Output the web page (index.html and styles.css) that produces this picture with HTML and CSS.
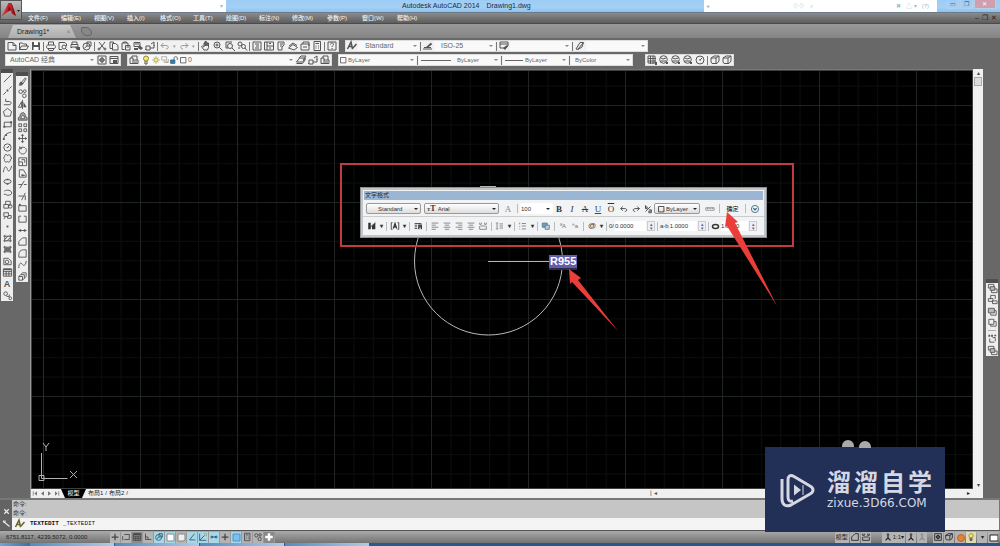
FILE: index.html
```html
<!DOCTYPE html>
<html lang="zh-CN">
<head>
<meta charset="utf-8">
<title>Autodesk AutoCAD 2014 - Drawing1.dwg</title>
<link rel="stylesheet" href="styles.css">
</head>
<body>
<svg class="defs" aria-hidden="true">
<defs>
<symbol id="new" viewBox="0 0 12 12"><path d="M2 2.500h5l3 3v4.500H2z M7 2.500v3h3"/></symbol>
<symbol id="open" viewBox="0 0 12 12"><path d="M1.500 9.500V3h3l1 1h3v2M1.500 9.500l2-3.500h7l-2 3.500z"/></symbol>
<symbol id="save" viewBox="0 0 12 12"><path class="f" d="M2 2h7l1 1v7H2z"/><path class="w" d="M4 2h4v3H4zM3.500 7h5v3h-5z"/></symbol>
<symbol id="print" viewBox="0 0 12 12"><path d="M3.500 5V2h5v3M3 8.500C1 8.500 1 5 3 5h6c2 0 2 3.500 0 3.500zM3 8.500h6l-1 2H4z"/></symbol>
<symbol id="preview" viewBox="0 0 12 12"><path d="M5 9.500H2v-7h6l1.500 1.500v2"/><circle cx="7" cy="7" r="2"/><path d="M8.500 8.500l2 2"/></symbol>
<symbol id="publish" viewBox="0 0 12 12"><path d="M3 4.500V2h5v2.500M2 8V4.500h7V7H3z"/><path class="f" d="M6 7h5v3H8z"/></symbol>
<symbol id="globe" viewBox="0 0 12 12"><circle cx="6" cy="6" r="4"/><path d="M2 6h8M6 2c-3 3-3 5 0 8c3-3 3-5 0-8"/></symbol>
<symbol id="print3d" viewBox="0 0 12 12"><circle cx="5.500" cy="6.500" r="3.500"/><path d="M6 2h4v4H6zM6 6L3.500 8"/></symbol>
<symbol id="cut" viewBox="0 0 12 12"><path d="M3 2l5.500 7M9 2L3.500 9"/><circle cx="3" cy="9" r="1"/><circle cx="9" cy="9" r="1"/></symbol>
<symbol id="copy" viewBox="0 0 12 12"><path d="M2 2h3.500v2M2 2v6.500h2M4.500 3.500h3l2.500 2v4.500h-5.500z"/></symbol>
<symbol id="paste" viewBox="0 0 12 12"><path d="M4.500 9.500H2V3h6v2M3.500 3V2h3v1"/><path d="M5.500 5.500h4.500V10H5.500zM6.500 7h2.500"/></symbol>
<symbol id="match" viewBox="0 0 12 12"><path d="M2 2.500h6v4H2zM3 4h4"/><path class="f" d="M7 5l4 3-2 2-3-2zM2 8h4v2H2z"/></symbol>
<symbol id="blockedit" viewBox="0 0 12 12"><path d="M2 6h4v4H2zM6 8h4V5M7 4l3-2v4M2 9l-1 1"/></symbol>
<symbol id="undo" viewBox="0 0 12 12"><path d="M2 5.500h5c3 0 3 3.500 0 3.500M4.500 3L2 5.500 4.500 8"/></symbol>
<symbol id="redo" viewBox="0 0 12 12"><path d="M10 5.500H5C2 5.500 2 9 5 9M7.500 3L10 5.500 7.500 8"/></symbol>
<symbol id="pan" viewBox="0 0 12 12"><path d="M4 10L1.500 6.500l1-.5L4 7V3l1-.5V6V1.500h1V6V2h1v4l.5-3h1v4.500L7.500 10z"/></symbol>
<symbol id="zoom" viewBox="0 0 12 12"><circle cx="5" cy="5" r="3"/><path d="M7.500 7.500L10.500 10.500M3.500 5h3M5 3.500v3"/></symbol>
<symbol id="zoomwin" viewBox="0 0 12 12"><path d="M2 8V2h6M2 8h2"/><circle cx="6" cy="6" r="2.500"/><path d="M8 8l3 3"/></symbol>
<symbol id="zoomprev" viewBox="0 0 12 12"><circle cx="4" cy="4" r="2"/><circle cx="7.500" cy="6.500" r="2"/><path d="M9 8l2 2.500M2 8h2"/></symbol>
<symbol id="props" viewBox="0 0 12 12"><path d="M2 2h8v8H2zM4 4h4M5 6h3M4 8h4"/></symbol>
<symbol id="dc" viewBox="0 0 12 12"><path d="M1.500 2h9v8h-9zM4 2v8M4 6h6.500M6 3.500h2M6 8h2"/></symbol>
<symbol id="tp" viewBox="0 0 12 12"><path d="M3 2h6v3L7 7v3H3zM5 4h3M5 6h2"/></symbol>
<symbol id="sheet" viewBox="0 0 12 12"><path d="M1.500 8L6 4.500l4.500 3L7 10zM2 6l4-3 4 2.500"/></symbol>
<symbol id="markup" viewBox="0 0 12 12"><path d="M2 4h8v6H2zM4 4V2h6v4M4 7h4"/></symbol>
<symbol id="calc" viewBox="0 0 12 12"><path d="M3 1.500h6.500v9H3zM4.500 3.500h3.500M4.500 6h1M7 6h1M4.500 8h1M7 8h1"/></symbol>
<symbol id="help" viewBox="0 0 12 12"><path d="M2 2h8v8H2z"/><path d="M4.500 4.500c0-2 3-2 3 0C7.500 5.500 6 5.500 6 7M6 8v1"/></symbol>
<symbol id="textstyle" viewBox="0 0 12 12"><path class="b" d="M1.500 9L5 2l1.500 7M3 6.500h3M6 9l4.500-5"/></symbol>
<symbol id="dimstyle" viewBox="0 0 12 12"><path d="M1 9h9M2 7.500h7"/><path class="f" d="M3 8l6-5.500 1 2L5 8z"/></symbol>
<symbol id="tablestyle" viewBox="0 0 12 12"><path d="M2 2h8v4L7 9M2 2v6h4M2 4h8"/><path class="f" d="M5 8l4-3 1 1-3 4z"/></symbol>
<symbol id="leader" viewBox="0 0 12 12"><path d="M2 9L6 2.500h3.500L8 7 4 9.500zM4 9l5-6"/></symbol>
<symbol id="gear" viewBox="0 0 12 12"><path d="M2 2h8v8H2z"/><circle cx="6" cy="6" r="2"/><path d="M6 3v6M3 6h6"/></symbol>
<symbol id="wsave" viewBox="0 0 12 12"><path d="M2 2.500h8v7H2zM2 4.500h8"/><path class="f" d="M5 6h4v3H5z"/></symbol>
<symbol id="layers" viewBox="0 0 12 12"><path d="M2 9.500V4h3v5.500zM5 6h5v3.500H5M4 4V2h5v4M6 8h3"/></symbol>
<symbol id="bulb" viewBox="0 0 12 12"><circle cx="6" cy="4.500" r="2.500" fill="#f7ea67" stroke="#8b8740"/><path d="M5 7v3h2V7"/></symbol>
<symbol id="sun" viewBox="0 0 12 12"><circle cx="6" cy="6" r="2.500" fill="#f4ec90" stroke="#99914b"/><path stroke="#99914b" d="M6 1.500v1M6 9.500v1M1.500 6h1M9.500 6h1M3 3l.5.5M9 3l-.5.5M3 9l.5-.5M9 9l-.5-.5"/></symbol>
<symbol id="vpfreeze" viewBox="0 0 12 12"><path stroke="#aaa" d="M2 2h6v4H2zM5 6v3h5V5"/><circle cx="8" cy="8" r="1" stroke="#bba94c"/></symbol>
<symbol id="unlock" viewBox="0 0 12 12"><path d="M2 6h5v4H2z" fill="#3882b8" stroke="#235c86"/><path d="M6 6V3.500c0-2 4-2 4 0V6"/></symbol>
<symbol id="square" viewBox="0 0 12 12"><path d="M3 3h6.500v6.500H3z"/></symbol>
<symbol id="stack" viewBox="0 0 12 12"><path d="M1.500 8l3-4h6l-3 4zM1.500 9.500h6l3-4M4 4l2-2h5L8 6"/></symbol>
<symbol id="sphere" viewBox="0 0 12 12"><circle cx="5.500" cy="5.500" r="3.800"/><path d="M3 4l2 1 3-1M3 7h5"/><path class="f" d="M8 8h2v2H8z"/></symbol>
<symbol id="box3" viewBox="0 0 12 12"><path d="M2 4l3-2h5v5L8 9.500H3L2 8zM2 4h5v5M7 4l3-2"/></symbol>
<symbol id="gridbox" viewBox="0 0 12 12"><path d="M2 2h7v7H2zM4.500 2v8M7 2v8M2 4.500h8M2 7h8"/><path class="f" d="M9 8h2v3H9z"/></symbol>
<symbol id="line" viewBox="0 0 12 12"><path d="M2 10l8-8"/></symbol>
<symbol id="xline" viewBox="0 0 12 12"><path d="M1.500 10.500l3-3M8 4l2.500-2.500"/><path class="f" d="M4 6l2 2M5 5h2v2H5z"/></symbol>
<symbol id="pline" viewBox="0 0 12 12"><path d="M2 9.500h6c3 0 2-4 0-3.500H4M4 3v3"/></symbol>
<symbol id="polygon" viewBox="0 0 12 12"><path d="M6 1.500l4.500 3.500L9 10H3L1.500 5z"/></symbol>
<symbol id="rect" viewBox="0 0 12 12"><path d="M2.500 3.500h7.500v5H2.500z"/><path class="f" d="M1.500 7.500h2v2h-2zM9 2.500h2v2H9z"/></symbol>
<symbol id="arc" viewBox="0 0 12 12"><path d="M2 10C2 6 5 3 10 2.500"/><path class="f" d="M1 9h2v2H1zM3.500 4.500h2v2h-2z"/></symbol>
<symbol id="circle" viewBox="0 0 12 12"><circle cx="6" cy="6" r="4"/><path d="M6 6l2-2M5 6h2"/></symbol>
<symbol id="cloud" viewBox="0 0 12 12"><path d="M3 4c-1-3 3-3 3-1 1-2 4-1 3 1 2 0 2 3 0 3 1 3-3 4-3 2-1 2-4 1-3-2-2-1-1-3 0-3z"/></symbol>
<symbol id="spline" viewBox="0 0 12 12"><path d="M1.500 9C3 0 5 3 6 6s3 2 4.500-4"/></symbol>
<symbol id="ellipse" viewBox="0 0 12 12"><ellipse cx="6" cy="6" rx="4" ry="2.200"/><path class="f" d="M5 3h2v1.500H5zM5 8h2v1.500H5z"/></symbol>
<symbol id="earc" viewBox="0 0 12 12"><path d="M2.500 4.500c3-2 8-1 8 2S5 9.500 4 8M4 8H2"/></symbol>
<symbol id="insert" viewBox="0 0 12 12"><path d="M2 6h5v4H2zM4 6V2.500h5V7H7"/><circle cx="9" cy="8" r="2"/></symbol>
<symbol id="mkblock" viewBox="0 0 12 12"><path d="M2 3h5v4H2zM7 6h3v3H6V7M2 10l2-3"/></symbol>
<symbol id="point" viewBox="0 0 12 12"><path class="f" d="M5 5h2v2H5z"/></symbol>
<symbol id="hatch" viewBox="0 0 12 12"><path d="M3 2v8M9 2v8M1.500 3.500h9M1.500 8.500h9M3 7l4-4M5 9l4-4"/></symbol>
<symbol id="gradient" viewBox="0 0 12 12"><path d="M3 2v8M9 2v8M1.500 3.500h9M1.500 8.500h9"/><path fill="#777" d="M4 4.500h4v3H4z"/></symbol>
<symbol id="region" viewBox="0 0 12 12"><path d="M2 2.500h5l3 3v4H2z"/><circle cx="5.500" cy="6.500" r="2"/></symbol>
<symbol id="table" viewBox="0 0 12 12"><path d="M1.500 2h9v8h-9zM1.500 5h9M1.500 7.500h9M4.500 5v5M7.500 5v5"/><path class="f" d="M2 2h8v1.500H2z"/></symbol>
<symbol id="addsel" viewBox="0 0 12 12"><circle cx="4" cy="4" r="2"/><path d="M5 7h3M8 5v2"/><circle cx="9" cy="9" r="1.500"/></symbol>
<symbol id="erase" viewBox="0 0 12 12"><path d="M2 10h3M4 8l5-6 1 1-4 6z"/><path class="f" d="M2 9l2-3 3 2-2 2z"/></symbol>
<symbol id="copyobj" viewBox="0 0 12 12"><circle cx="4" cy="4" r="2"/><circle cx="8.500" cy="3.500" r="1.500"/><circle cx="8" cy="8.500" r="2"/></symbol>
<symbol id="mirror" viewBox="0 0 12 12"><path d="M6 1v10M5 3v6H1.500z"/><path class="f" d="M7 3v6h3.500z"/></symbol>
<symbol id="offset" viewBox="0 0 12 12"><path fill="#aaa" d="M1.500 10V7l2-1V3.500l2-1.500h2L9 4v2l2 1v3zM4 8.500h4V6L6 4.500 5 6z"/></symbol>
<symbol id="array" viewBox="0 0 12 12"><path d="M2 2h3v3H2zM7.500 2h3v3h-3zM2 7.500h3v3H2zM7.500 7.500h3v3h-3z"/></symbol>
<symbol id="move" viewBox="0 0 12 12"><path d="M6 2v8M2 6h8"/><path class="f" d="M6 1l2 2H4zM6 11l2-2H4zM1 6l2-2v4zM11 6L9 4v4z"/></symbol>
<symbol id="rotate" viewBox="0 0 12 12"><path d="M4 3c4-2 7 1 6 4s-5 4-7 1 0-5 2-5M3 1.500V4h2.500"/></symbol>
<symbol id="scale" viewBox="0 0 12 12"><path d="M2 2h8.500v8.500H2zM2 6.500h4v4M5 4h3.500v3.500"/></symbol>
<symbol id="stretch" viewBox="0 0 12 12"><path d="M2.500 10V2H7l3 5v3zM5 8h4"/><path class="f" d="M5 7h2v2H5z"/></symbol>
<symbol id="trim" viewBox="0 0 12 12"><path d="M1.500 6h4M7.500 6h3M3 10l5-8"/></symbol>
<symbol id="extend" viewBox="0 0 12 12"><path d="M1.500 5.500h5M8 5.500h1M5 10l4-8M9 5v5"/></symbol>
<symbol id="breakpt" viewBox="0 0 12 12"><path d="M2 4h8v6H2z"/><path class="f" d="M2 2h2v2H2z"/></symbol>
<symbol id="snap" viewBox="0 0 12 12"><path d="M4 3h6v6H4M2 5v5"/></symbol>
<symbol id="break" viewBox="0 0 12 12"><path d="M4.500 3.500H2V10h8V3.500H7.500"/></symbol>
<symbol id="join" viewBox="0 0 12 12"><path d="M1.500 6h9"/><path class="f" d="M3 4l2.500 2L3 8zM9 4L6.500 6 9 8z"/></symbol>
<symbol id="chamfer" viewBox="0 0 12 12"><path d="M2 10V6l4-4h4v8z"/></symbol>
<symbol id="fillet" viewBox="0 0 12 12"><path d="M2 10V7c0-3 2-5 5-5h3v8z"/></symbol>
<symbol id="blend" viewBox="0 0 12 12"><path d="M2 10c0-7 3-6 4-4s4 1 4-4"/></symbol>
<symbol id="explode" viewBox="0 0 12 12"><path d="M2 6l2-2h4v4l-2 2H2zM4 4l2-2h4v4L8 8M2 6h4v4"/></symbol>
<symbol id="front" viewBox="0 0 12 12"><path d="M1.500 1.500h6v4h-6zM5 7.500v3h6v-4H8.500"/><path fill="#bbb" d="M3.500 4h5v4h-5z"/></symbol>
<symbol id="back" viewBox="0 0 12 12"><path d="M4 5V1.500h5v4M1.500 5h5v3h-5zM6 7.500h5v3H6z"/></symbol>
<symbol id="above" viewBox="0 0 12 12"><path d="M4 8v2h6V5H8.500"/><path fill="#bbb" d="M1.500 2.500h6.500v5H1.500z"/></symbol>
<symbol id="under" viewBox="0 0 12 12"><path d="M2 2.500h5.500V8H2zM7.500 5H10v5H4V8"/></symbol>
<symbol id="annfront" viewBox="0 0 12 12"><path d="M3 6v4h5M6 5h3v4"/><path class="f" d="M1.500 2h2v2h-2zM4.500 2h2v2h-2zM8 2h2v1.500H8z"/></symbol>
<symbol id="just" viewBox="0 0 12 12"><path d="M2 2.500h8M3.500 5h5M2 7.500h8M3.500 10h5"/></symbol>
<symbol id="left" viewBox="0 0 12 12"><path d="M2 2.500h8M2 5h5M2 7.500h8M2 10h5"/></symbol>
<symbol id="right" viewBox="0 0 12 12"><path d="M2 2.500h8M5 5h5M2 7.500h8M5 10h5"/></symbol>
<symbol id="dist" viewBox="0 0 12 12"><path d="M2 2v2h2V2M8 2v2h2V2M3 6h6M2 10h8V6M2 6v4"/></symbol>
<symbol id="linesp" viewBox="0 0 12 12"><path d="M2.500 2v8M1.500 3l1-1 1 1M1.500 9l1 1 1-1M5.500 3.500h4M5.500 6h4M5.500 8.500h4"/></symbol>
<symbol id="list" viewBox="0 0 12 12"><path d="M2 2v2M2 6v1M2 9v1M4.500 3h5M4.500 6h5M4.500 9.500h5"/></symbol>
<symbol id="field" viewBox="0 0 12 12"><path fill="#6f9fbd" stroke="#4d7c99" d="M1.500 2.500h6v5h-6z"/><path fill="#bcd" stroke="#678" d="M5 5h5v5H5z"/></symbol>
<symbol id="ruler" viewBox="0 0 12 12"><path d="M1 4.500h10v3H1zM3 4.500v1.500M5 4.500v1.500M7 4.500v1.500M9 4.500v1.500"/></symbol>
<symbol id="cols" viewBox="0 0 12 12"><path class="f" d="M1.500 2h3v8h-3zM6 6l4-4v8H6z"/><path d="M2 9l8-7"/></symbol>
<symbol id="mtj" viewBox="0 0 12 12"><path d="M3 2H1.500v8H3M9 2h1.500v8H9"/><path class="b" d="M4 9l2-6 2 6M5 7h2"/></symbol>
<symbol id="para" viewBox="0 0 12 12"><path d="M2 3h8M2 5h3M2 7h3M2 9h3"/><path class="b" d="M7 10V5h3v5M7 7h3"/></symbol>
<symbol id="frac" viewBox="0 0 12 12"><path d="M3 1.500v4h2v-2H3M3 9l6-6M7 7h3v3.500H7V8.500h3"/></symbol>
<symbol id="more" viewBox="0 0 12 12"><circle cx="6" cy="6" r="4.300" stroke="#2f6181"/><path class="b" stroke="#2f6181" d="M4 5l2 2 2-2"/></symbol>
<symbol id="cross" viewBox="0 0 12 12"><path class="b" d="M6 2v8M2 6h8"/></symbol>
<symbol id="plus" viewBox="0 0 12 12"><path stroke="#fff" stroke-width="3" d="M6 1.500v9M1.500 6h9"/></symbol>
<symbol id="ortho" viewBox="0 0 12 12"><path d="M3 2v7h7M3 6h3v3"/></symbol>
<symbol id="angle" viewBox="0 0 12 12"><path d="M9 2L3 9.500h7"/></symbol>
<symbol id="ducs" viewBox="0 0 12 12"><path d="M2 2v8h8M2 10l6-6"/><path stroke="#d4923c" d="M7 2h3v3"/></symbol>
<symbol id="close" viewBox="0 0 12 12"><path class="b" d="M3 3l6 6M9 3L3 9"/></symbol>
<symbol id="wrench" viewBox="0 0 12 12"><path class="b" d="M2 2v2l2 1 6 5M4 2v3"/></symbol>
<symbol id="person" viewBox="0 0 12 12"><circle cx="6" cy="3" r="1"/><path class="b" d="M6 4v3l-3 3M6 7l3 3"/></symbol>
<symbol id="nav-first" viewBox="0 0 12 12"><path d="M3 3v6"/><path class="f" d="M8 3v6L4.500 6z"/></symbol>
<symbol id="nav-prev" viewBox="0 0 12 12"><path class="f" d="M8 3v6L4 6z"/></symbol>
<symbol id="nav-next" viewBox="0 0 12 12"><path class="f" d="M4 3v6l4-3z"/></symbol>
<symbol id="nav-last" viewBox="0 0 12 12"><path d="M9 3v6"/><path class="f" d="M4 3v6l3.500-3z"/></symbol>
</defs>
</svg>

<header class="titlebar">
  <button class="app" aria-label="应用程序菜单"><svg viewBox="0 0 20 19"><path fill="#c2202b" d="M1 15L7.500 2h3L15 15l-4-2-1.500-3.500L5 12z"/><path fill="#e9545a" d="M7.500 2L4 11l-3 4z"/><path fill="#7d0d18" d="M8 5l2 4-3 1zM10.500 2L15 15l-3-3z"/><path fill="#222" d="M16 9h3l-1.500 2z"/></svg></button>
  <div class="blank quick"><span>▾</span></div>
  <h1>Autodesk AutoCAD 2014 <span>Drawing1.dwg</span></h1>
  <div class="blank info"><span>◂</span><span class="push">♢♢</span><span>⌕</span><span class="push">✖</span><span>△ ▾</span><span>(?)</span></div>
  <div class="winbtns"><button aria-label="最小化">▭</button><button aria-label="还原">❐</button><button class="red" aria-label="关闭">✕</button></div>
</header>

<nav class="menubar">
  <a href="#">文件(F)</a><a href="#">编辑(E)</a><a href="#">视图(V)</a><a href="#">插入(I)</a><a href="#">格式(O)</a><a href="#">工具(T)</a><a href="#">绘图(D)</a><a href="#">标注(N)</a><a href="#">修改(M)</a><a href="#">参数(P)</a><a href="#">窗口(W)</a><a href="#">帮助(H)</a>
  <span class="mdi"><button aria-label="最小化文档">–</button><button aria-label="还原文档">❐</button><button aria-label="关闭文档">✕</button></span>
</nav>

<div class="filetabs">
  <div class="filetab"><span>Drawing1*</span><button aria-label="关闭图形">✕</button></div>
  <button class="newtab" aria-label="新图形"></button>
</div>

<div class="toolbars">
  <div class="bars">
    <div class="bar standard">
      <button aria-label="新建"><svg><use href="#new"/></svg></button><button aria-label="打开"><svg><use href="#open"/></svg></button><button aria-label="保存"><svg><use href="#save"/></svg></button><i></i>
      <button aria-label="打印"><svg><use href="#print"/></svg></button><button aria-label="打印预览"><svg><use href="#preview"/></svg></button><button aria-label="发布"><svg><use href="#publish"/></svg></button><button aria-label="三维打印"><svg><use href="#print3d"/></svg></button><i></i>
      <button aria-label="剪切"><svg><use href="#cut"/></svg></button><button aria-label="复制"><svg><use href="#copy"/></svg></button><button aria-label="粘贴"><svg><use href="#paste"/></svg></button><button aria-label="特性匹配"><svg><use href="#match"/></svg></button><button aria-label="块编辑器"><svg><use href="#blockedit"/></svg></button><i></i>
      <button class="off" aria-label="放弃"><svg><use href="#undo"/></svg></button><b>▾</b><button class="off" aria-label="重做"><svg><use href="#redo"/></svg></button><b>▾</b><i></i>
      <button aria-label="实时平移"><svg><use href="#pan"/></svg></button><button aria-label="实时缩放"><svg><use href="#zoom"/></svg></button><button aria-label="窗口缩放"><svg><use href="#zoomwin"/></svg></button><button aria-label="缩放上一个"><svg><use href="#zoomprev"/></svg></button><i></i>
      <button aria-label="特性"><svg><use href="#props"/></svg></button><button aria-label="设计中心"><svg><use href="#dc"/></svg></button><button aria-label="工具选项板"><svg><use href="#tp"/></svg></button><button aria-label="图纸集"><svg><use href="#sheet"/></svg></button><button aria-label="标记集"><svg><use href="#markup"/></svg></button><button aria-label="计算器"><svg><use href="#calc"/></svg></button><i></i>
      <button aria-label="帮助"><svg><use href="#help"/></svg></button>
    </div>
    <div class="bar styles">
      <button aria-label="文字样式"><svg><use href="#textstyle"/></svg></button><span class="combo w62"><select aria-label="文字样式"><option>Standard</option></select></span><i></i>
      <button aria-label="标注样式"><svg><use href="#dimstyle"/></svg></button><span class="combo w62"><select aria-label="标注样式"><option>ISO-25</option></select></span><i></i>
      <button aria-label="表格样式"><svg><use href="#tablestyle"/></svg></button><span class="combo w62"><select aria-label="表格样式"><option></option></select></span><i></i>
      <button aria-label="多重引线样式"><svg><use href="#leader"/></svg></button><span class="combo w62"><select aria-label="多重引线样式"><option></option></select></span>
    </div>
  </div>
  <div class="bars">
    <div class="bar">
      <span class="combo w90"><select aria-label="工作空间"><option>AutoCAD 经典</option></select></span>
      <button aria-label="工作空间设置"><svg><use href="#gear"/></svg></button><button aria-label="我的工作空间"><svg><use href="#wsave"/></svg></button>
    </div>
    <div class="bar">
      <button aria-label="图层特性"><svg><use href="#layers"/></svg></button>
      <span class="combo w155"><svg><use href="#bulb"/></svg><svg class="tight"><use href="#sun"/></svg><svg class="tight"><use href="#vpfreeze"/></svg><svg class="tight"><use href="#unlock"/></svg><svg class="tight"><use href="#square"/></svg><select class="near" aria-label="图层"><option>0</option></select></span>
      <button aria-label="置为当前图层"><svg><use href="#stack"/></svg></button><button aria-label="上一个图层"><svg><use href="#blockedit"/></svg></button><button aria-label="图层状态"><svg><use href="#layers"/></svg></button>
    </div>
    <div class="bar song">
      <span class="combo w77"><svg class="tight"><use href="#square"/></svg><select class="near" aria-label="颜色"><option>ByLayer</option></select></span><i></i>
      <span class="combo w81"><em class="long"></em><select aria-label="线型"><option>ByLayer</option></select></span><i></i>
      <span class="combo w65"><em></em><select class="near" aria-label="线宽"><option>ByLayer</option></select></span><i></i>
      <span class="combo w62"><select aria-label="打印样式"><option>ByColor</option></select></span>
    </div>
    <div class="bar views">
      <button aria-label="视口"><svg><use href="#gridbox"/></svg></button><button aria-label="二维线框"><svg><use href="#sphere"/></svg></button><button aria-label="线框"><svg><use href="#sphere"/></svg></button><button aria-label="隐藏"><svg><use href="#sphere"/></svg></button><button aria-label="真实"><svg><use href="#circle"/></svg></button><i></i><button aria-label="概念"><svg><use href="#box3"/></svg></button><button aria-label="视觉样式"><svg><use href="#box3"/></svg></button>
    </div>
  </div>
</div>

<main class="work">
  <div class="side">
    <div class="palette draw">
      <button aria-label="直线"><svg><use href="#line"/></svg></button><button aria-label="构造线"><svg><use href="#xline"/></svg></button><button aria-label="多段线"><svg><use href="#pline"/></svg></button><button aria-label="多边形"><svg><use href="#polygon"/></svg></button><button aria-label="矩形"><svg><use href="#rect"/></svg></button><button aria-label="圆弧"><svg><use href="#arc"/></svg></button><button aria-label="圆"><svg><use href="#circle"/></svg></button><button aria-label="修订云线"><svg><use href="#cloud"/></svg></button><button aria-label="样条曲线"><svg><use href="#spline"/></svg></button><button aria-label="椭圆"><svg><use href="#ellipse"/></svg></button><button aria-label="椭圆弧"><svg><use href="#earc"/></svg></button><button aria-label="插入块"><svg><use href="#insert"/></svg></button><button aria-label="创建块"><svg><use href="#mkblock"/></svg></button><button aria-label="点"><svg><use href="#point"/></svg></button><button aria-label="图案填充"><svg><use href="#hatch"/></svg></button><button aria-label="渐变色"><svg><use href="#gradient"/></svg></button><button aria-label="面域"><svg><use href="#region"/></svg></button><button aria-label="表格"><svg><use href="#table"/></svg></button><button class="big" aria-label="多行文字">A</button><button aria-label="添加选定对象"><svg><use href="#addsel"/></svg></button>
    </div>
    <div class="palette modify">
      <button aria-label="删除"><svg><use href="#erase"/></svg></button><button aria-label="复制对象"><svg><use href="#copyobj"/></svg></button><button aria-label="镜像"><svg><use href="#mirror"/></svg></button><button aria-label="偏移"><svg><use href="#offset"/></svg></button><button aria-label="阵列"><svg><use href="#array"/></svg></button><button aria-label="移动"><svg><use href="#move"/></svg></button><button aria-label="旋转"><svg><use href="#rotate"/></svg></button><button aria-label="缩放"><svg><use href="#scale"/></svg></button><button aria-label="拉伸"><svg><use href="#stretch"/></svg></button><button aria-label="修剪"><svg><use href="#trim"/></svg></button><button aria-label="延伸"><svg><use href="#extend"/></svg></button><button aria-label="打断于点"><svg><use href="#breakpt"/></svg></button><button aria-label="打断"><svg><use href="#break"/></svg></button><button aria-label="合并"><svg><use href="#join"/></svg></button><button aria-label="倒角"><svg><use href="#chamfer"/></svg></button><button aria-label="圆角"><svg><use href="#fillet"/></svg></button><button aria-label="光顺曲线"><svg><use href="#blend"/></svg></button><button aria-label="分解"><svg><use href="#explode"/></svg></button>
    </div>
  </div>

  <section class="drawing">
    <div class="canvas">
      <svg class="scene" aria-label="绘图区">
        <defs>
          <pattern id="minor" x="12" y="35" width="19.400" height="19.400" patternUnits="userSpaceOnUse"><path d="M.5 0v19.400M0 .5h19.400" stroke="#0c0e0f"/></pattern>
          <pattern id="major" x="12" y="35" width="97" height="97" patternUnits="userSpaceOnUse"><path d="M.5 0v97M0 .5h97" stroke="#202425"/></pattern>
        </defs>
        <rect width="100%" height="100%" fill="url(#minor)"/>
        <rect width="100%" height="100%" fill="url(#major)"/>
        <path d="M12.500 0v408" stroke="#1c3323"/>
        <circle cx="457.500" cy="191" r="74" stroke="#b9b9b9"/>
        <path d="M457 191.500h62M449 116.500h16" stroke="#b5b5b5"/>
        <path d="M10.500 383v25.500h26M8 405.500h5v5H8zM39 401l7 7M46 401l-7 7M12 373l3 4 3-4M15 377v4" stroke="#b0b0b0"/>
      </svg>
      <span class="dimtext">R955</span>
      <div class="markbox"></div>
      <form class="textfmt">
        <h2>文字格式</h2>
        <div class="frow">
          <span class="drop w55 mid"><select aria-label="样式"><option>Standard</option></select></span>
          <span class="drop w75"><strong><small>T</small>T</strong><select aria-label="字体"><option>Arial</option></select></span>
          <button type="button" class="off serif" aria-label="注释性">A</button><i></i>
          <span class="drop plain w32"><input aria-label="文字高度" value="100"></span>
          <button type="button" class="serif bold">B</button><button type="button" class="serif ital">I</button><button type="button" class="serif strike">A</button><button type="button" class="serif under">U</button><button type="button" class="serif over">O</button>
          <button type="button" aria-label="放弃"><svg><use href="#undo"/></svg></button><button type="button" aria-label="重做"><svg><use href="#redo"/></svg></button><button type="button" aria-label="堆叠"><svg><use href="#frac"/></svg></button>
          <span class="drop w45"><svg class="tight"><use href="#square"/></svg><select aria-label="文字颜色"><option>ByLayer</option></select></span>
          <button type="button" class="wide off" aria-label="标尺"><svg><use href="#ruler"/></svg></button><i></i>
          <button type="button" class="ok">确定</button><i></i>
          <button type="button" class="wide" aria-label="选项"><svg><use href="#more"/></svg></button>
        </div>
        <div class="frow second">
          <button type="button" aria-label="栏数"><svg><use href="#cols"/></svg></button><b>▾</b><i></i>
          <button type="button" aria-label="多行文字对正"><svg><use href="#mtj"/></svg></button><b>▾</b><i></i>
          <button type="button" aria-label="段落"><svg><use href="#para"/></svg></button><i></i>
          <button type="button" class="soft" aria-label="左对齐"><svg><use href="#left"/></svg></button><button type="button" class="soft" aria-label="居中"><svg><use href="#just"/></svg></button><button type="button" class="soft" aria-label="右对齐"><svg><use href="#right"/></svg></button><button type="button" class="soft" aria-label="对正"><svg><use href="#just"/></svg></button><button type="button" class="soft" aria-label="分布"><svg><use href="#dist"/></svg></button><i></i>
          <button type="button" class="soft" aria-label="行距"><svg><use href="#linesp"/></svg></button><b>▾</b><i></i>
          <button type="button" class="soft" aria-label="编号"><svg><use href="#list"/></svg></button><b>▾</b><i></i>
          <button type="button" aria-label="插入字段"><svg><use href="#field"/></svg></button><i></i>
          <button type="button" class="soft" aria-label="大写">ªA</button><button type="button" class="soft" aria-label="小写">ᴬa</button><i></i>
          <button type="button" class="at" aria-label="符号">@</button><b>▾</b><i></i>
          <label class="spin">0/<input aria-label="倾斜角度" value="0.0000"><span>▴<br>▾</span></label><i></i>
          <label class="spin">a-b<input aria-label="追踪" value="1.0000"><span>▴<br>▾</span></label><i></i>
          <label class="spin"><svg viewBox="0 0 9 7"><ellipse class="b" cx="4.500" cy="3.500" rx="3" ry="2"/></svg><input aria-label="宽度因子" value="1.0000"><span>▴<br>▾</span></label>
        </div>
      </form>
      <svg class="arrows" aria-hidden="true"><path d="M696 142l11 10-3 1 42 83-50-80-2 1zM538 199l12 9-3 2 40 51-46-49-2 2z"/></svg>
    </div>
    <div class="vscroll"><span>▴</span><div></div><span class="down">▾</span></div>
    <div class="layouts">
      <button aria-label="第一个"><svg><use href="#nav-first"/></svg></button><button aria-label="上一个"><svg><use href="#nav-prev"/></svg></button><button aria-label="下一个"><svg><use href="#nav-next"/></svg></button><button aria-label="最后一个"><svg><use href="#nav-last"/></svg></button>
      <a class="on" href="#">模型</a><a href="#">布局1</a><span>/</span><a href="#">布局2</a><span>/</span>
      <span class="split">⌊ ◂</span><span class="end">▸</span>
    </div>
  </section>

  <div class="rside">
    <div class="palette order">
      <button aria-label="前置"><svg><use href="#front"/></svg></button><button aria-label="后置"><svg><use href="#back"/></svg></button><button aria-label="置于对象之上"><svg><use href="#above"/></svg></button><button aria-label="置于对象之下"><svg><use href="#under"/></svg></button><hr><button aria-label="注释前置"><svg><use href="#annfront"/></svg></button><button aria-label="图案填充后置"><svg><use href="#front"/></svg></button>
    </div>
  </div>
</main>

<section class="command">
  <div class="grip"><button aria-label="关闭命令行"><svg><use href="#close"/></svg></button><button aria-label="自定义"><svg><use href="#wrench"/></svg></button></div>
  <div class="lines">
    <p>命令:</p><p>命令:</p>
    <div class="prompt"><svg><use href="#textstyle"/></svg><label for="cmd"><b>TEXTEDIT</b></label><input id="cmd" value="_TEXTEDIT"></div>
  </div>
</section>

<footer class="status">
  <span class="coords">6751.8117, 4239.5072, 0.0000</span>
  <div class="toggles">
    <button aria-label="推断约束"><svg><use href="#cross"/></svg></button><button aria-label="捕捉"><svg><use href="#snap"/></svg></button><button class="mid" aria-label="栅格"><svg><use href="#table"/></svg></button><button aria-label="正交"><svg><use href="#ortho"/></svg></button><button class="on" aria-label="极轴"><svg><use href="#print3d"/></svg></button><button class="on" aria-label="对象捕捉"><svg><path fill="#fff" stroke="#888" d="M2 2h7v7H2z"/></svg></button><button aria-label="三维对象捕捉"><svg><path fill="#eee" stroke="#888" d="M2 2h7v6L7 9H2z"/></svg></button><button class="on" aria-label="对象追踪"><svg><use href="#angle"/></svg></button><button class="on" aria-label="动态UCS"><svg><use href="#ducs"/></svg></button><button class="on" aria-label="动态输入"><svg><use href="#join"/></svg></button><button aria-label="线宽"><svg><use href="#cross"/></svg></button><button class="on" aria-label="透明度"><svg><path fill="#7dc0f0" stroke="#4a94c8" d="M2 2h7v7H2z"/></svg></button><button aria-label="快捷特性"><svg><use href="#calc"/></svg></button><button aria-label="选择循环"><svg><use href="#copyobj"/></svg></button><button class="white" aria-label="注释监视器"><svg><use href="#plus"/></svg></button>
  </div>
  <div class="tray">
    <button class="text">模型</button><button aria-label="快速查看布局"><svg><use href="#chamfer"/></svg></button><button aria-label="快速查看图形"><svg><use href="#dist"/></svg></button>
    <button class="text scale"><svg><use href="#person"/></svg>1:1▾</button><button aria-label="注释可见性"><svg><use href="#person"/></svg></button><button class="dim" aria-label="自动缩放"><svg><use href="#person"/></svg></button>
    <button class="gap" aria-label="切换工作空间"><svg><use href="#gear"/></svg></button><button aria-label="锁定"><svg><use href="#box3"/></svg></button><button aria-label="硬件加速"><svg><circle cx="6" cy="6" r="3.500" fill="#e08438" stroke="#c4641e"/></svg></button><button class="pale" aria-label="隔离对象"><svg><use href="#bulb"/></svg></button><button class="text" aria-label="状态栏菜单">▾</button><button aria-label="全屏显示"><svg><path fill="#fff" d="M2 3h8v6H2z"/></svg></button>
  </div>
</footer>
<div class="taskbar"><span></span><span></span><span></span><span></span></div>

<aside class="brand">
  <svg viewBox="0 0 36 36"><path d="M3 7v20c0 6 4 8 9 6L31 22c4-2 4-6 0-8L15 4.500C11 2.500 9 4 9 8v17c0 4 2 5 5 4"/><path class="play" d="M15 12.500l7 5.500-7 5.500z"/><path class="thin" d="M24 13v10"/></svg>
  <div><strong><span>溜</span><span>溜</span><span>自</span><span>学</span></strong><small>zixue.3D66.COM</small></div>
</aside>
</body>
</html>
```
FILE: styles.css
```css
* { box-sizing: border-box; }
body {
  margin: 0;
  height: 100vh;
  display: flex;
  flex-direction: column;
  position: relative;
  overflow: hidden;
  background: #686868;
  color: #555;
  font: 7px/10px "Liberation Sans", "Noto Sans CJK SC", sans-serif;
}
button, input, select { font: inherit; color: inherit; border: 0; padding: 0; margin: 0; background: none; border-radius: 0; }
select { appearance: none; outline: 0; flex: 1; min-width: 0; height: 10px; }
button { display: flex; align-items: center; justify-content: center; flex: none; }
a { color: inherit; text-decoration: none; }
svg { width: 12px; height: 12px; flex: none; fill: none; stroke: currentColor; stroke-width: 1; display: block; }
.defs { position: absolute; width: 0; height: 0; }
.f { fill: currentColor; stroke: none; }
.w { fill: #fff; stroke: none; }
.b { stroke-width: 1.5; }
.push { margin-left: auto; }
.off { color: #999; }

.titlebar {
  flex: none;
  height: 13px;
  display: flex;
  align-items: stretch;
  background: linear-gradient(#9cccf5, #a4d0f6 60%, #8fc2ee);
  border-bottom: 1px solid #6a7b8b;
  position: relative;
}
.app { width: 22px; height: 20px; background: linear-gradient(#bbb, #858585); border: 1px solid #555; z-index: 2; }
.app svg { width: 20px; height: 19px; stroke: none; }
.blank { background: #fff; display: flex; align-items: center; color: #9cc0c8; font-size: 6px; gap: 5px; }
.quick { width: 204px; justify-content: flex-end; padding-right: 3px; }
.titlebar h1 { flex: 1; margin: 0; font-size: 7px; line-height: 12px; font-weight: 400; color: #1d2c3c; padding-left: 176px; white-space: nowrap; }
.titlebar h1 span { margin-left: 5px; }
.info { width: 233px; padding: 0 8px 0 2px; }
.winbtns { width: 63px; display: flex; gap: 1px; padding: 0 4px 3px 10px; }
.winbtns button { flex: 1; border: 1px solid #b4d0ea; border-top: 0; color: #4d6680; font-size: 6px; border-radius: 0 0 2px 2px; }
.winbtns .red { flex: 2; background: #cf9fae; color: #fff; }

.menubar {
  flex: none;
  height: 11px;
  display: flex;
  align-items: center;
  padding-left: 28px;
  background: linear-gradient(#8b8b8b, #5d5d5d);
  border-bottom: 1px solid #4b4b4b;
  color: #f4f4f4;
  font-size: 6px;
  font-weight: 500;
}
.menubar a { width: 33px; white-space: nowrap; }
.menubar a:nth-child(n+9) { width: 35px; }
.mdi { margin-left: auto; display: flex; gap: 3px; padding-right: 3px; color: #222; font-size: 7px; }

.filetabs { flex: none; height: 14px; display: flex; align-items: flex-end; gap: 5px; padding-left: 8px; background: linear-gradient(#999, #858585); }
.filetab { width: 68px; height: 13px; display: flex; align-items: center; justify-content: space-between; padding: 0 5px 0 9px; background: linear-gradient(#c9c9c9, #adadad); clip-path: polygon(5px 0, 62px 0, 100% 100%, 0 100%); color: #222; }
.filetab button { color: #888; font-size: 6px; }
.newtab { width: 11px; height: 9px; margin-bottom: 2px; border: 1px solid #666; border-radius: 1px 6px 3px 6px; background: #888; }

.toolbars { flex: none; display: flex; flex-direction: column; gap: 2px; padding: 2px 0 3px 5px; }
.bars { display: flex; gap: 6px; }
.bar { height: 12px; display: flex; align-items: center; background: #f1f1f1; border: 1px solid #ddd; }
.bar i { width: 1px; height: 9px; margin: 0 1px; background: #777; flex: none; }
.bar button { width: 12px; height: 10px; }
.bar b { width: 7px; color: #999; font-size: 5px; font-weight: 400; text-align: center; }
.bar.styles i { margin: 0 1px; }
.combo { display: flex; align-items: center; position: relative; background: #f9f9f9; height: 10px; padding-right: 7px; }
.combo::after, .drop::after { content: ""; position: absolute; right: 2px; top: 4px; border: 2px solid transparent; border-top-color: #888; border-bottom: 0; }
.combo select { padding-left: 4px; color: #666; }
.combo .near { padding-left: 0; }
.styles select { padding-left: 7px; }
.song select { font-size: 6px; }
.tight { width: 10px; height: 10px; margin-left: -1px; }
.combo em { width: 18px; height: 1px; background: #666; margin: 0 2px; }
.combo .long { width: 30px; }
.w90 { width: 90px; } .w155 { width: 155px; } .w77 { width: 77px; } .w81 { width: 81px; } .w65 { width: 65px; } .w62 { width: 61px; }
.views { margin-left: 6px; }

.work { flex: 1; min-height: 0; display: flex; }
.side { width: 31px; display: flex; align-items: flex-start; gap: 3px; padding-left: 1px; border-right: 1px solid #999; }
.palette { width: 12px; display: flex; flex-direction: column; background: #eee; border-top: 4px solid #4e4e4e; }
.palette button { flex: 1; min-height: 0; width: 12px; }
.palette svg { width: 11px; height: 11px; }
.draw { height: 232px; }
.modify { height: 210px; margin-top: 3px; }
.big { font-size: 9px; font-weight: 700; }
.drawing { flex: 1; min-width: 0; display: grid; grid-template: 1fr 9px / 1fr 10px; }
.canvas { position: relative; background: #000; overflow: hidden; border-top: 1px solid #777; }
.scene, .arrows { position: absolute; inset: 0; width: 100%; height: 100%; }
.arrows { fill: #ea3e3b; stroke: none; }
.dimtext { position: absolute; left: 518px; top: 185px; padding: 0 1px; background: #635ca8; border-bottom: 2px solid #2c2a4c; color: #fff; font-size: 11px; line-height: 13px; font-weight: 700; }
.markbox { position: absolute; left: 309px; top: 93px; width: 454px; height: 84px; border: 2px solid #c23b40; }
.vscroll { background: #f0f0f0; display: flex; flex-direction: column; align-items: center; color: #444; font-size: 6px; line-height: 8px; }
.vscroll div { width: 8px; height: 9px; background: #ddd; border: 1px solid #aaa; }
.down { margin-top: auto; }
.layouts { grid-column: 1 / 3; display: flex; align-items: center; background: #f0f0f0; color: #222; font-size: 6px; line-height: 9px; padding-left: 1px; }
.layouts button { width: 7px; color: #777; }
.layouts button svg { width: 9px; height: 9px; }
.layouts a { padding: 0 2px; }
.layouts .on { width: 25px; margin-left: 1px; background: #000; color: #fff; text-align: center; clip-path: polygon(0 0, 100% 0, 84% 100%, 16% 100%); }
.split { margin-left: 522px; color: #555; }
.end { margin-left: auto; padding-right: 13px; }
.rside { width: 17px; padding: 210px 2px 0 3px; }
.order { height: 77px; }
.order hr { width: 8px; margin: 2px auto; border: 0; border-top: 1px solid #aaa; }

.textfmt {
  position: absolute;
  left: 329px;
  top: 117px;
  width: 407px;
  background: #f2f3f4;
  border: 3px solid #c3c6c9;
  outline: 1px solid #8d9094;
  outline-offset: -1px;
  color: #333;
  font-size: 6px;
}
.textfmt h2 { margin: 1px; padding-left: 1px; background: #9bb6d3; font-size: 6px; line-height: 9px; font-weight: 400; color: #1b2633; }
.frow { display: flex; align-items: center; height: 16px; padding-left: 3px; border-bottom: 1px solid #ccc; }
.second { height: 18px; border: 0; }
.frow i { width: 1px; height: 9px; margin: 0 2px; background: #bbb; flex: none; }
.frow button { width: 12px; height: 12px; }
.frow svg { width: 10px; height: 10px; }
.frow b { width: 6px; text-align: center; font-size: 6px; }
.frow .soft { color: #777; }
.drop { position: relative; display: flex; align-items: center; height: 11px; padding: 0 7px 0 2px; margin-right: 3px; border: 1px solid #999; border-radius: 2px; background: linear-gradient(#fff, #ddd); }
.drop::after { top: 4px; border-top-color: #222; }
.drop select { height: 9px; }
.drop input { width: 100%; height: 9px; }
.drop strong { margin-right: 2px; font: 700 8px/9px "Liberation Serif", serif; }
.drop small { font-size: 5px; }
.plain { border-color: #fff; background: #fff; margin-right: 0; padding-left: 0; }
.mid select { padding-left: 9px; }
.w55 { width: 55px; } .w75 { width: 75px; } .w32 { width: 33px; } .w45 { width: 46px; }
.frow .serif { font: 9px/10px "Liberation Serif", serif; width: 12px; margin-right: 1px; }
.frow .off { color: #888; }
.frow .bold { font-weight: 700; }
.frow .ital { font-style: italic; }
.frow .strike { text-decoration: line-through; }
.frow .under { text-decoration: underline; color: #2c4a70; }
.frow .over { text-decoration: overline; }
.frow .wide { width: 14px; }
.frow .ok { width: 21px; color: #000; }
.frow .at { font-size: 8px; }
.spin { display: flex; align-items: center; gap: 1px; width: 46px; color: #333; }
.spin input { flex: 1; min-width: 0; height: 10px; background: #fff; }
.spin span { width: 8px; height: 10px; border: 1px solid #ccc; background: #eef; color: #667; font-size: 5px; line-height: 4px; text-align: center; }
.second .spin svg { width: 9px; height: 7px; }

.command { flex: none; display: flex; height: 32px; padding: 2px 1px 0 0; background: #777; }
.grip { width: 12px; background: #636363; color: #eee; display: flex; flex-direction: column; justify-content: space-around; align-items: center; padding-top: 5px; }
.grip svg { width: 9px; height: 9px; }
.lines { flex: 1; background: #c5c5c5; color: #333; font-size: 6px; line-height: 8px; }
.lines p { margin: 0; padding-left: 1px; height: 9px; }
.prompt { display: flex; align-items: center; height: 12px; background: #f4f4f4; padding-left: 2px; font: 6px/10px "Liberation Mono", monospace; color: #111; }
.prompt svg { margin-right: 4px; color: #65652c; }
.prompt input { flex: 1; margin-left: 4px; height: 10px; }

.status { flex: none; display: flex; align-items: center; height: 13px; padding: 0 2px 0 6px; background: linear-gradient(#aaa, #737373); border-top: 1px solid #555; color: #222; font-size: 6px; }
.coords { width: 104px; white-space: nowrap; }
.toggles, .tray { display: flex; align-items: center; gap: 1px; }
.status button { min-width: 10px; height: 11px; background: #b4b4b4; }
.status svg { width: 10px; height: 10px; }
.toggles { gap: 0; background: #999; color: #444; }
.status .toggles button { width: 11px; border-right: 1px solid #999; }
.status .on { background: #a8d8e8; color: #28566a; }
.status .mid { background: #8c8c8c; }
.status .white { background: #888; }
.tray { margin-left: auto; }
.tray .text { padding: 0 1px; }
.tray .scale { margin-left: 10px; }
.tray .gap { margin-left: 5px; }
.tray .dim { color: #888; }
.status .pale { background: #dedab4; }

.taskbar { flex: none; height: 3px; display: flex; gap: 1px; padding-left: 30px; background: linear-gradient(90deg, #6aa8d8, #2a5e91 4%, #23598e 60%, #255789); }
.taskbar span { width: 84px; background: linear-gradient(90deg, #4c8ec2, #a9cfe6); }

.brand {
  position: absolute;
  right: 55px;
  bottom: 14px;
  width: 180px;
  height: 85px;
  display: flex;
  align-items: center;
  gap: 12px;
  padding-left: 14px;
  background: #222f56;
  color: #d5d8e2;
}
.brand::before { content: ""; position: absolute; left: 77px; top: -7px; width: 12px; height: 7px; border-radius: 6px 6px 0 0; background: #aaa; box-shadow: 17px 1px #aaa; }
.brand svg { width: 36px; height: 36px; stroke-width: 3; }
.brand .play { fill: currentColor; stroke: none; }
.brand .thin { stroke-width: 1; }
.brand strong { display: flex; gap: 3px; font-size: 24px; line-height: 26px; font-weight: 700; }
.brand small { display: block; font: 12px/14px "DejaVu Sans", sans-serif; }
```
